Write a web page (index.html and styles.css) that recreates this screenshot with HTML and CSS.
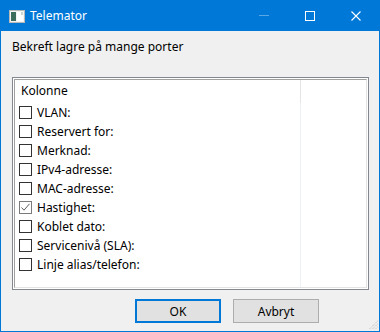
FILE: index.html
```html
<!DOCTYPE html>
<html lang="no">
<head>
  <meta charset="UTF-8">
  <title>Telemator</title>
  <link rel="stylesheet" href="styles.css">
</head>
<body>
  <div class="window">
    <div class="titlebar">
      <svg class="app-icon" width="16" height="13" viewBox="0 0 16 13">
        <rect x="0.5" y="0.5" width="15" height="12" fill="#f4f4f4" stroke="#b9b9b9"/>
        <rect x="2" y="2" width="5" height="9" fill="#3d6b5c"/>
        <rect x="8" y="2" width="6" height="9" fill="#ffffff"/>
        <rect x="12" y="2" width="2" height="3" fill="#c8d8cf"/>
      </svg>
      <span class="title">Telemator</span>
      <div class="controls">
        <div class="ctl"><span class="min"></span></div>
        <div class="ctl"><span class="max"></span></div>
        <div class="ctl">
          <svg width="10" height="10" viewBox="0 0 10 10">
            <path d="M0.5 0.5 L9.5 9.5 M9.5 0.5 L0.5 9.5" stroke="#fff" stroke-width="1.1"/>
          </svg>
        </div>
      </div>
    </div>

    <div class="content">
      <p class="prompt">Bekreft lagre på mange porter</p>

      <div class="listbox">
        <div class="list-inner">
          <div class="list-header">
            <div class="col-main">Kolonne</div>
            <div class="col-rest"></div>
          </div>
          <div class="list-body">
            <div class="col-main">
              <label class="row"><span class="box"></span>VLAN:</label>
              <label class="row"><span class="box"></span>Reservert for:</label>
              <label class="row"><span class="box"></span>Merknad:</label>
              <label class="row"><span class="box"></span>IPv4-adresse:</label>
              <label class="row"><span class="box"></span>MAC-adresse:</label>
              <label class="row"><span class="box checked">
                <svg width="11" height="11" viewBox="0 0 11 11"><path d="M1.5 5.5 L4 8.2 L9.5 1.8" fill="none" stroke="#5e5e5e" stroke-width="1"/></svg>
              </span>Hastighet:</label>
              <label class="row"><span class="box"></span>Koblet dato:</label>
              <label class="row"><span class="box"></span>Servicenivå (SLA):</label>
              <label class="row"><span class="box"></span>Linje alias/telefon:</label>
            </div>
            <div class="col-rest"></div>
          </div>
        </div>
      </div>

      <div class="buttons">
        <button class="btn default">OK</button>
        <button class="btn">Avbryt</button>
      </div>
    </div>

    <svg class="grip" width="10" height="10" viewBox="0 0 10 10">
      <path d="M9.5 1 L1 9.5 M9.5 4 L4 9.5 M9.5 7 L7 9.5" stroke="#b4b4b4" stroke-width="1" stroke-dasharray="1 1"/>
    </svg>
  </div>
</body>
</html>
```

FILE: styles.css
```css
body {
  margin: 0;
  font-family: "Noto Sans", "DejaVu Sans", sans-serif;
  font-size: 12px;
  color: #000;
}
.window {
  position: relative;
  width: 380px;
  height: 332px;
  box-sizing: border-box;
  border: 1px solid #0078d7;
  border-top: none;
  background: #f0f0f0;
  display: flex;
  flex-direction: column;
}
.titlebar {
  height: 31px;
  background: #0078d7;
  display: flex;
  align-items: center;
  padding-left: 8px;
  color: #fff;
}
.app-icon {
  margin-top: 1px;
}
.title {
  margin-left: 5px;
  font-size: 12px;
}
.controls {
  margin-left: auto;
  display: flex;
  height: 100%;
}
.ctl {
  width: 46px;
  display: flex;
  align-items: center;
  justify-content: center;
}
.min {
  width: 10px;
  height: 1px;
  background: rgba(255, 255, 255, 0.35);
}
.max {
  width: 8px;
  height: 8px;
  border: 1px solid #fff;
}
.content {
  padding: 8px 0 0 11px;
  display: flex;
  flex-direction: column;
}
.prompt {
  margin: 0;
  line-height: 16px;
}
.listbox {
  margin-top: 22px;
  width: 357px;
  height: 213px;
  box-sizing: border-box;
  border: 1px solid #828790;
  padding: 1px;
  background: #fff;
}
.list-inner {
  height: 100%;
  box-sizing: border-box;
  border: 1px solid;
  border-color: #a0a0a0 #e3e3e3 #e3e3e3 #a0a0a0;
  display: flex;
  flex-direction: column;
}
.list-header {
  display: flex;
  height: 23px;
}
.list-header .col-main {
  padding-left: 6px;
  line-height: 22px;
  border-right: 1px solid #e5e5e5;
}
.list-body {
  flex: 1;
  display: flex;
}
.list-body .col-main {
  border-right: 1px solid #eef2f8;
}
.col-main {
  width: 286px;
  box-sizing: border-box;
}
.col-rest {
  flex: 1;
}
.row {
  height: 19px;
  display: flex;
  align-items: center;
  padding-left: 4px;
}
.box {
  width: 13px;
  height: 13px;
  box-sizing: border-box;
  border: 1px solid #333;
  margin-right: 5px;
  display: flex;
  align-items: center;
  justify-content: center;
}
.box.checked {
  border-color: #7a7a7a;
}
.buttons {
  display: flex;
  gap: 12px;
  margin-top: 9px;
  padding-left: 123px;
}
.btn {
  width: 86px;
  height: 24px;
  box-sizing: border-box;
  background: #e1e1e1;
  border: 1px solid #adadad;
  font-family: "Noto Sans", "DejaVu Sans", sans-serif;
  font-size: 12px;
  color: #000;
  padding: 0;
}
.btn.default {
  border: 2px solid #0078d7;
}
.grip {
  position: absolute;
  right: 1px;
  bottom: 1px;
}
```
